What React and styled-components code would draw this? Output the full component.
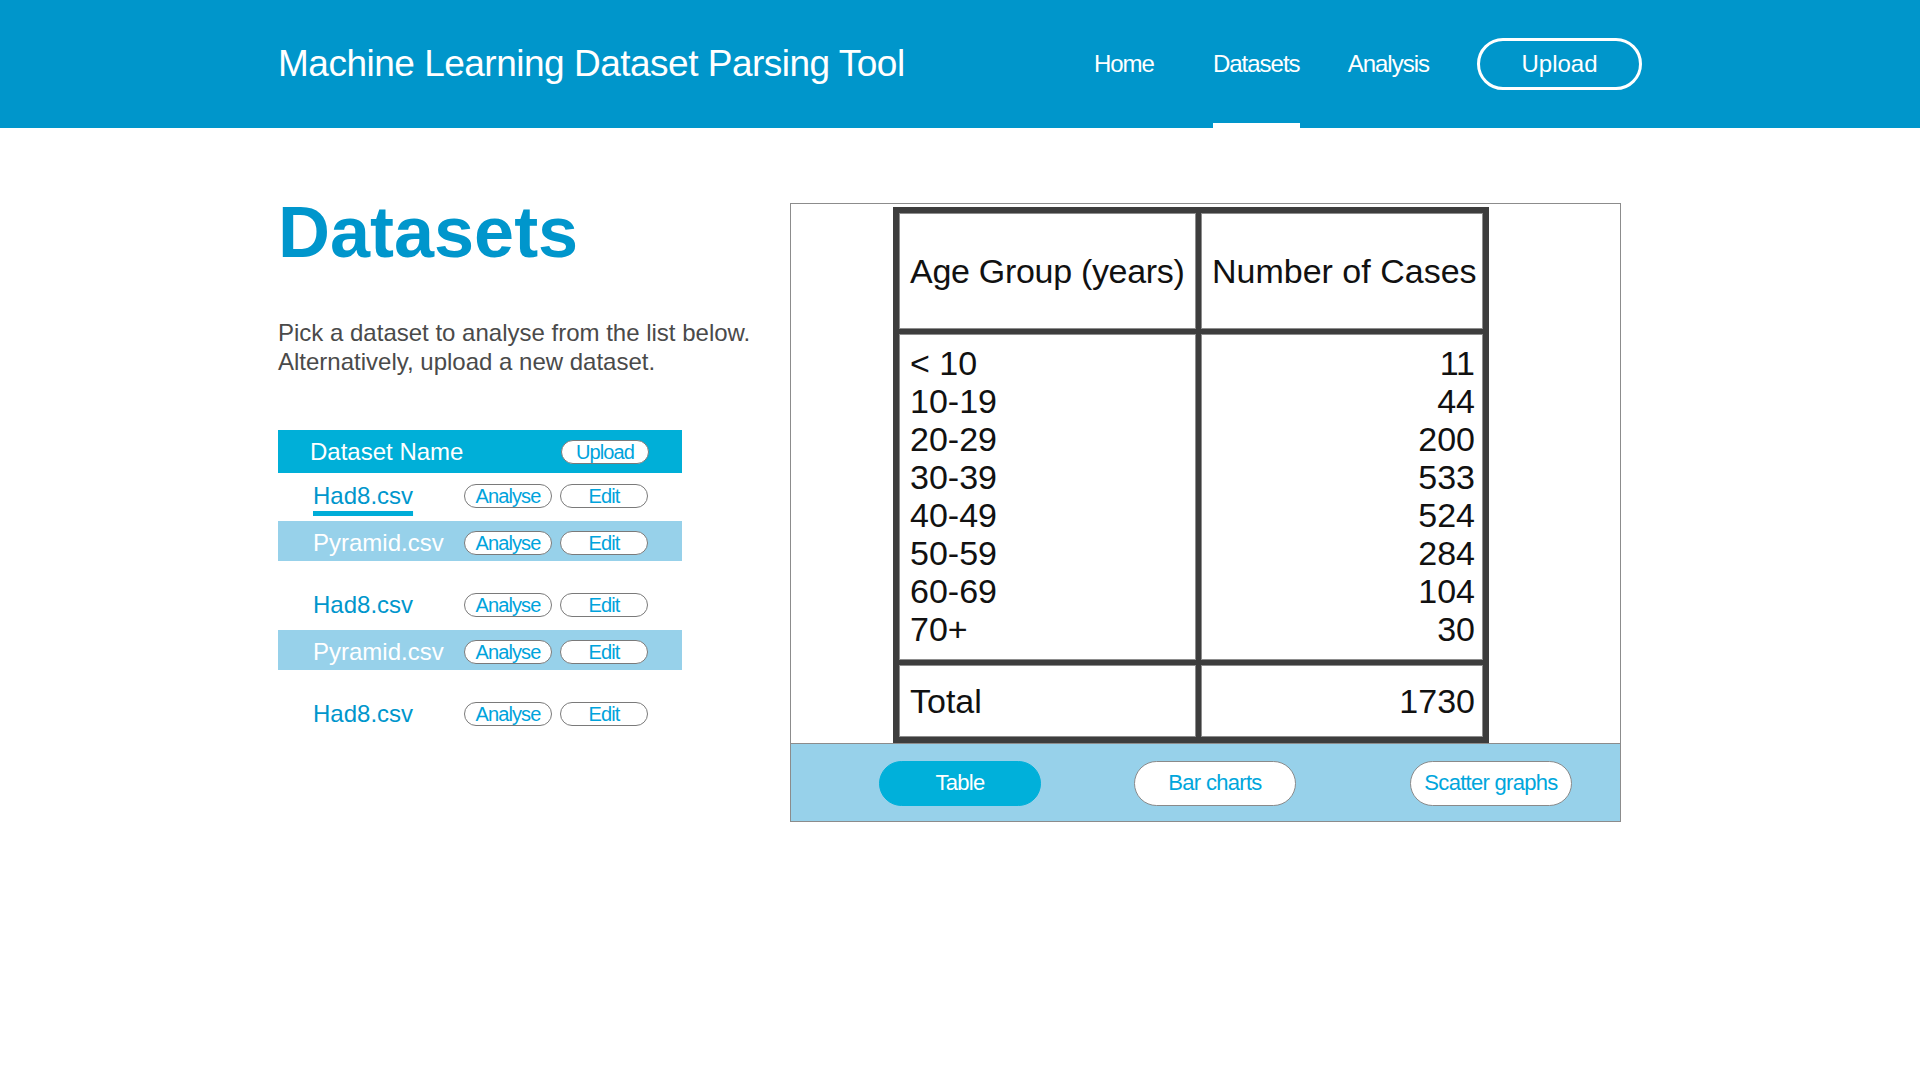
import React from 'react';
import styled, { createGlobalStyle } from 'styled-components';

const GlobalStyle = createGlobalStyle`
    body {
        margin: 0;
        background: #fff;
        font-family: "Liberation Sans", Arial, Helvetica, sans-serif;
    }

    button {
        font-family: inherit;
        cursor: pointer;
    }
`;

const Header = styled.header`
    height: 128px;
    background: #0096cb;
`;

const HeaderInner = styled.div`
    width: 1364px;
    height: 100%;
    margin: 0 auto;
    display: flex;
    align-items: center;
    justify-content: space-between;
`;

const Brand = styled.div`
    color: #fff;
    font-size: 37px;
    letter-spacing: -0.5px;
`;

const Nav = styled.nav`
    height: 100%;
    display: flex;
    align-items: center;
    gap: 48px;
`;

const NavLink = styled.a`
    height: 100%;
    display: flex;
    align-items: center;
    margin-right: ${(p) => p.$extra || 0}px;
    color: #fff;
    font-size: 24px;
    letter-spacing: -1px;
    text-decoration: none;
    box-shadow: ${(p) => (p.$active ? 'inset 0 -5px 0 #fff' : 'none')};
`;

const HeaderButton = styled.button`
    width: 165px;
    height: 52px;
    border: 3px solid #fff;
    border-radius: 26px;
    background: transparent;
    color: #fff;
    font-size: 24px;
`;

const Main = styled.main`
    width: 1364px;
    margin: 0 auto;
    padding-top: 68px;
    display: grid;
    grid-template-columns: 512px 831px;
    align-items: start;
`;

const Title = styled.h1`
    margin: 0;
    font-size: 72px;
    line-height: 72px;
    font-weight: 700;
    color: #0096cc;
`;

const Intro = styled.p`
    margin: 50px 0 0;
    font-size: 24px;
    line-height: 29px;
    color: #4a4a4a;
`;

const DatasetList = styled.div`
    width: 404px;
    margin-top: 54px;
`;

const ListHeader = styled.div`
    height: 43px;
    box-sizing: border-box;
    padding: 0 33px 0 32px;
    display: flex;
    align-items: center;
    justify-content: space-between;
    background: #00afd8;
    color: #fff;
    font-size: 24px;
`;

const Row = styled.div`
    box-sizing: border-box;
    display: flex;
    align-items: center;
    line-height: 26px;
    background: ${(p) => (p.$shaded ? '#97d1ea' : '#fff')};
    height: ${(p) => (p.$shaded ? '40px' : 'auto')};
    padding: ${(p) => {
        if (p.$shaded) return '3px 33px 0 35px';
        return `${p.$first ? 10 : 31}px 33px 12px 35px`;
    }};
`;

const FileName = styled.span`
    width: 151px;
    flex-shrink: 0;
    white-space: nowrap;
    font-size: 24px;
    color: ${(p) => (p.$shaded ? '#fff' : '#0096cc')};
    text-decoration: ${(p) => (p.$active ? 'underline' : 'none')};
    text-decoration-color: #00add8;
    text-decoration-thickness: 5px;
    text-underline-offset: 7px;
`;

const PillGroup = styled.div`
    display: flex;
    gap: 8px;
`;

const Pill = styled.button`
    width: 88px;
    height: 24px;
    padding: 0;
    border: 1px solid #7a7a7a;
    border-radius: 12px;
    background: #fff;
    color: #00a3dc;
    font-size: 20px;
    line-height: 1;
    letter-spacing: -0.9px;
`;

const Panel = styled.section`
    margin-top: 7px;
    border: 1px solid #8c8c8c;
    display: flex;
    flex-direction: column;
`;

const PanelBody = styled.div`
    padding: 3px 0 0 102px;
    background: #fff;
`;

const DataTable = styled.div`
    width: 596px;
    box-sizing: border-box;
    display: grid;
    grid-template-columns: 295px 280px;
    grid-template-rows: 114px 324px 70px;
    gap: 7px;
    padding: 7px;
    background: #3d3d3d;
    color: #111;
    font-family: Arial, "Liberation Sans", sans-serif;
`;

const Cell = styled.div`
    box-sizing: border-box;
    background: #fff;
    box-shadow: 0 0 0 1px #8d8d8d;
    padding: 0 ${(p) => (p.$right ? '7px' : '8px')} 0 10px;
    white-space: nowrap;
`;

const HeadCell = styled(Cell)`
    display: flex;
    align-items: center;
    font-size: ${(p) => p.$size}px;
    letter-spacing: ${(p) => p.$track || 0}px;
`;

const BodyCell = styled(Cell)`
    padding-top: 9px;
    font-size: 34px;
    line-height: 38px;
    text-align: ${(p) => (p.$right ? 'right' : 'left')};
`;

const TotalCell = styled(Cell)`
    display: flex;
    align-items: center;
    justify-content: ${(p) => (p.$right ? 'flex-end' : 'flex-start')};
    font-size: 34px;
`;

const TabBar = styled.div`
    height: 78px;
    box-sizing: border-box;
    border-top: 1px solid #8c8c8c;
    background: #97d1ea;
    padding: 1px 48px 0 88px;
    display: flex;
    align-items: center;
    gap: 93px;

    & > :last-child {
        margin-left: auto;
    }
`;

const TabButton = styled.button`
    width: 162px;
    height: 45px;
    padding: 0;
    border-radius: 23px;
    border: 1px solid ${(p) => (p.$active ? '#00b0da' : '#8a8a8a')};
    background: ${(p) => (p.$active ? '#00b0da' : '#fff')};
    color: ${(p) => (p.$active ? '#fff' : '#00a6dc')};
    font-size: 22px;
    letter-spacing: -0.7px;
`;

const DATASETS = [
  { id: 1, name: 'Had8.csv', shaded: false, active: true },
  { id: 2, name: 'Pyramid.csv', shaded: true },
  { id: 3, name: 'Had8.csv', shaded: false },
  { id: 4, name: 'Pyramid.csv', shaded: true },
  { id: 5, name: 'Had8.csv', shaded: false },
];

const AGE_ROWS = [
  ['< 10', 11],
  ['10-19', 44],
  ['20-29', 200],
  ['30-39', 533],
  ['40-49', 524],
  ['50-59', 284],
  ['60-69', 104],
  ['70+', 30],
];

const TABS = ['Table', 'Bar charts', 'Scatter graphs'];

const App = () => {
  const total = AGE_ROWS.reduce((sum, [, n]) => sum + n, 0);

  return (
    <>
      <GlobalStyle />
      <Header>
        <HeaderInner>
          <Brand>Machine Learning Dataset Parsing Tool</Brand>
          <Nav>
            <NavLink href="#" $extra={11}>Home</NavLink>
            <NavLink href="#" $active>Datasets</NavLink>
            <NavLink href="#">Analysis</NavLink>
            <HeaderButton>Upload</HeaderButton>
          </Nav>
        </HeaderInner>
      </Header>

      <Main>
        <div>
          <Title>Datasets</Title>
          <Intro>
            Pick a dataset to analyse from the list below.
            <br />
            Alternatively, upload a new dataset.
          </Intro>

          <DatasetList>
            <ListHeader>
              <span>Dataset Name</span>
              <Pill>Upload</Pill>
            </ListHeader>
            {DATASETS.map((d, i) => (
              <Row key={d.id} $shaded={d.shaded} $first={i === 0}>
                <FileName $shaded={d.shaded} $active={d.active}>{d.name}</FileName>
                <PillGroup>
                  <Pill>Analyse</Pill>
                  <Pill>Edit</Pill>
                </PillGroup>
              </Row>
            ))}
          </DatasetList>
        </div>

        <Panel>
          <PanelBody>
            <DataTable>
              <HeadCell $size={34} $track={-0.3}>Age Group (years)</HeadCell>
              <HeadCell $size={34} $right>Number of Cases</HeadCell>
              <BodyCell>
                {AGE_ROWS.map(([label]) => (
                  <div key={label}>{label}</div>
                ))}
              </BodyCell>
              <BodyCell $right>
                {AGE_ROWS.map(([label, n]) => (
                  <div key={label}>{n}</div>
                ))}
              </BodyCell>
              <TotalCell>Total</TotalCell>
              <TotalCell $right>{total}</TotalCell>
            </DataTable>
          </PanelBody>
          <TabBar>
            {TABS.map((t, i) => (
              <TabButton key={t} $active={i === 0}>{t}</TabButton>
            ))}
          </TabBar>
        </Panel>
      </Main>
    </>
  );
};

export default App;
